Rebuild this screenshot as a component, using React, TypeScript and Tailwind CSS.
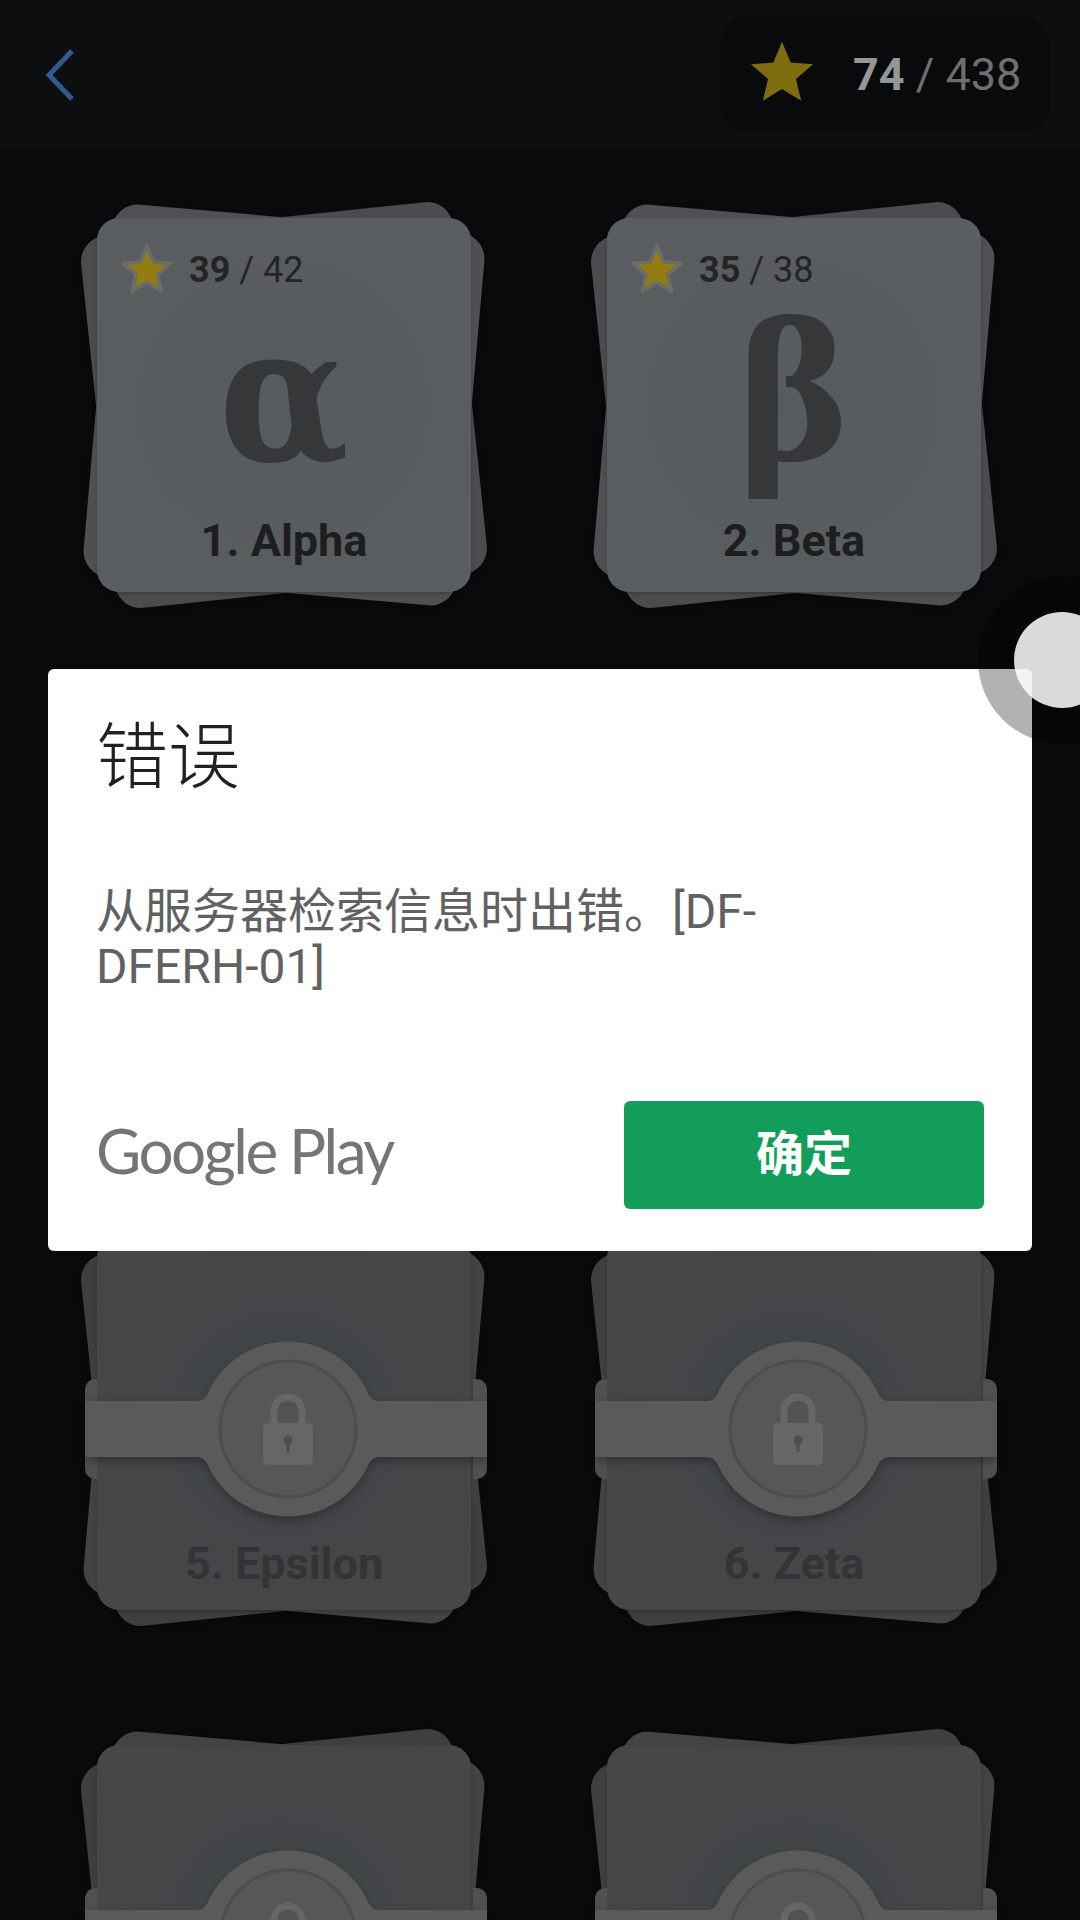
import React from 'react';

const STAR = '50,4 62.7,34.5 95.7,37.2 70.5,58.7 78.2,90.8 50,73.6 21.8,90.8 29.5,58.7 4.3,37.2 37.3,34.5';

const Star = ({ className, halo }: { className: string; halo?: boolean }) => (
  <svg viewBox="0 0 100 100" className={className}>
    <polygon
      points={STAR}
      fill={halo ? '#937d0e' : '#7f6c0f'}
      stroke={halo ? '#6b6d68' : 'none'}
      strokeWidth={halo ? 7 : 0}
      strokeLinejoin="round"
    />
  </svg>
);

// the two sheets peeking out from behind the front one
const CardStack = ({ locked }: { locked?: boolean }) => (
  <>
    <div className={`absolute inset-0 rounded-[26px] rotate-[-6deg] shadow-[0_2px_5px_rgba(0,0,0,0.2)] ${locked ? 'bg-[#3e3f40]' : 'bg-[#4b4c4d]'}`} />
    <div className={`absolute inset-0 rounded-[26px] rotate-[5deg] shadow-[0_2px_5px_rgba(0,0,0,0.2)] ${locked ? 'bg-[#424344]' : 'bg-[#4f5051]'}`} />
    <div
      className={`absolute inset-0 rounded-[22px] shadow-[0_2px_4px_rgba(0,0,0,0.2)] ${
        locked
          ? 'bg-[radial-gradient(circle_at_50%_50%,#414547,#464748)]'
          : 'bg-[radial-gradient(circle_at_50%_50%,#565b5e,#5b5e60)]'
      }`}
    />
  </>
);

const LockBand = () => (
  <svg
    viewBox="-12 0 402 374"
    className="absolute top-0 left-[-12px] w-[402px] h-[374px] overflow-visible"
  >
    <path d="M0 143H-2a10 10 0 0 0 -10 10V233a10 10 0 0 0 10 10H0Z" fill="#505050" />
    <path d="M376 143H380a10 10 0 0 1 10 10V233a10 10 0 0 1 -10 10H376Z" fill="#505050" />
    <path
      className="drop-shadow-[0_4px_5px_rgba(0,0,0,0.3)]"
      d="M-12 165H100Q106 165 110 159A88 88 0 0 1 272 159Q276 165 282 165H390V221H282Q276 221 272 227A88 88 0 0 1 110 227Q106 221 100 221H-12Z"
      fill="#5a5a5a"
    />
    <circle cx="191" cy="193" r="68" fill="#575757" stroke="#4d4d4d" strokeWidth="3" />
    <path d="M177 190V175a14 14 0 0 1 28 0V190" fill="#525252" stroke="#666666" strokeWidth="7" />
    <rect x="166" y="187" width="50" height="42" rx="5" fill="#666666" />
    <circle cx="191" cy="204" r="4.5" fill="#4e4e4e" />
    <rect x="189.5" y="205" width="3" height="11" fill="#4e4e4e" />
  </svg>
);

const UnlockedCard = ({ glyph, stars, total, title }: { glyph: string; stars: number; total: number; title: string }) => (
  <div className="relative w-[374px] h-[374px]">
    <CardStack />
    <div className="relative flex flex-col h-full items-center">
      <div className="self-start flex items-center pl-[24px] pt-[26px] gap-[16px]">
        <Star className="w-[52px] h-[52px]" halo />
        <span className="text-[36px] leading-[48px] text-[#232425]">
          <span className="font-bold">{stars}</span> / {total}
        </span>
      </div>
      <div className="mt-[22px] scale-x-[0.89] font-['DejaVu_Serif',serif] font-bold text-[190px] leading-[0.8] text-[#353738]">
        {glyph}
      </div>
      <div className="mt-[46px] text-[45px] leading-[50px] font-bold text-[#1d1e1f]">{title}</div>
    </div>
  </div>
);

const LockedCard = ({ title }: { title: string }) => (
  <div className="relative w-[374px] h-[374px]">
    <CardStack locked />
    <LockBand />
    <div className="relative flex flex-col justify-end items-center h-full pb-[21px]">
      <div className="text-[45px] leading-[50px] font-bold text-[#333435]">{title}</div>
    </div>
  </div>
);

export default function App() {
  return (
    <div className="relative w-[1080px] h-[1920px] overflow-hidden bg-[#090a0c] font-['Roboto','Noto_Sans_CJK_SC',sans-serif]">
      {/* Header */}
      <div className="h-[150px] bg-[#0d0e10] flex items-start justify-between pl-[45px] pr-[30px]">
        <svg viewBox="0 0 30 52" className="w-[30px] h-[52px] mt-[49px]">
          <path d="M27 2L4 26L27 50" fill="none" stroke="#2f5b92" strokeWidth="5" />
        </svg>
        <div className="mt-[15px] w-[330px] h-[118px] rounded-[30px] bg-[#090a0c] flex items-center pl-[28px]">
          <Star className="w-[68px] h-[68px] mt-[-3px]" />
          <span className="ml-[37px] text-[45px] leading-none text-[#6f6f6f]">
            <span className="font-bold text-[#969696]">74</span> / 438
          </span>
        </div>
      </div>

      {/* Levels */}
      <div className="grid grid-cols-[374px_374px] gap-x-[136px] gap-y-[135px] pl-[97px] pt-[68px]">
        <UnlockedCard glyph="α" stars={39} total={42} title="1. Alpha" />
        <UnlockedCard glyph="β" stars={35} total={38} title="2. Beta" />
        <LockedCard title="3. Gamma" />
        <LockedCard title="4. Delta" />
        <LockedCard title="5. Epsilon" />
        <LockedCard title="6. Zeta" />
        <LockedCard title="7. Eta" />
        <LockedCard title="8. Theta" />
      </div>

      {/* Error dialog */}
      <div className="absolute inset-0 flex items-center justify-center">
        <div className="w-[984px] h-[582px] bg-white rounded-[6px] flex flex-col px-[48px] pt-[46px] pb-[42px]">
          <div className="text-[72px] leading-[86px] font-light text-[#212121]">错误</div>
          <div className="mt-[83px] max-w-[800px] text-[48px] leading-[55px] text-[#616161]">
            从服务器检索信息时出错。[DF-DFERH-01]
          </div>
          <div className="mt-auto flex items-center justify-between">
            <span className="pb-[10px] font-['Lato',sans-serif] text-[62px] leading-none tracking-[-2.5px] text-[#757575]">Google Play</span>
            <button className="w-[360px] h-[108px] rounded-[6px] bg-[#129e5a] text-white text-[48px] font-bold">确定</button>
          </div>
        </div>
      </div>

      {/* Touch indicator */}
      <div className="absolute left-[978px] top-[576px] w-[168px] h-[168px] rounded-full bg-black/30 flex items-center justify-center">
        <div className="w-[96px] h-[96px] rounded-full bg-white/85" />
      </div>
    </div>
  );
}
